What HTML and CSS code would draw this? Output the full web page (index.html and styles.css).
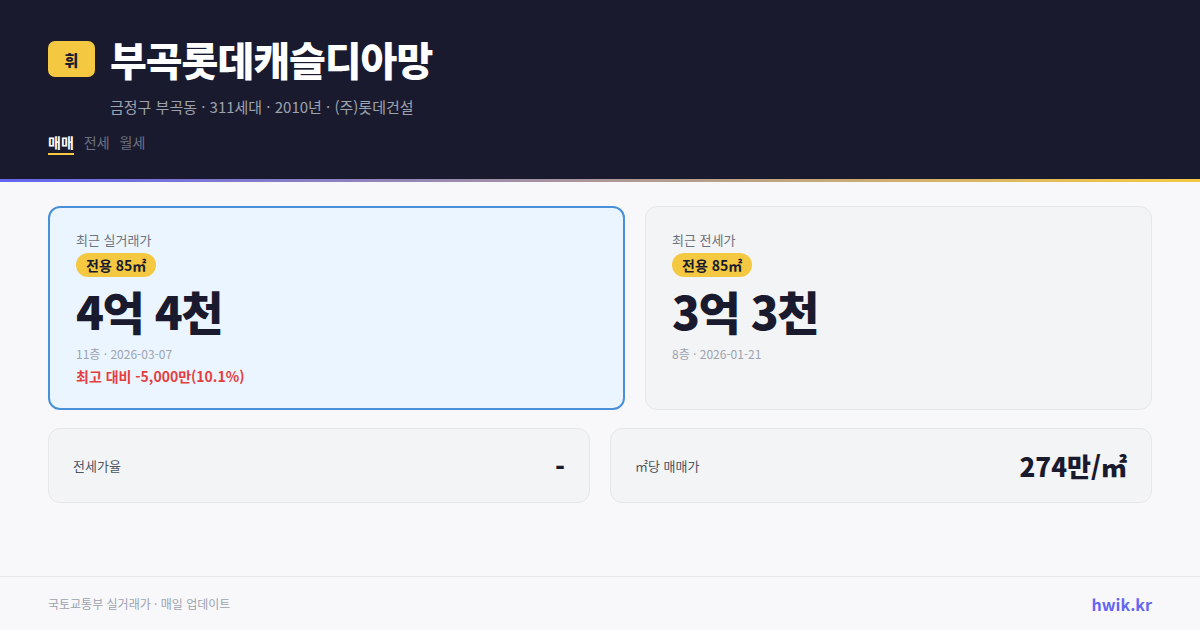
FILE: index.html
```html
<!DOCTYPE html>
<html lang="ko">
<head>
<meta charset="utf-8">
<link rel="stylesheet" href="styles.css">
</head>
<body>
<header class="hero">
  <div class="title-row">
    <div class="logo">휘</div>
    <h1 class="title">부곡롯데캐슬디아망</h1>
  </div>
  <p class="meta">금정구 부곡동 · 311세대 · 2010년 · (주)롯데건설</p>
  <nav class="tabs">
    <span class="tab active">매매</span>
    <span class="tab">전세</span>
    <span class="tab">월세</span>
  </nav>
</header>
<div class="accent"></div>
<main class="content">
  <section class="cards">
    <div class="card primary">
      <div class="label">최근 실거래가</div>
      <span class="badge">전용 85㎡</span>
      <div class="price">4억 4천</div>
      <div class="sub">11층 · 2026-03-07</div>
      <div class="diff">최고 대비 -5,000만(10.1%)</div>
    </div>
    <div class="card">
      <div class="label">최근 전세가</div>
      <span class="badge">전용 85㎡</span>
      <div class="price">3억 3천</div>
      <div class="sub">8층 · 2026-01-21</div>
    </div>
  </section>
  <section class="stats">
    <div class="stat">
      <span class="stat-label">전세가율</span>
      <span class="stat-value">-</span>
    </div>
    <div class="stat">
      <span class="stat-label">㎡당 매매가</span>
      <span class="stat-value">274만/㎡</span>
    </div>
  </section>
</main>
<footer class="footer">
  <span class="source">국토교통부 실거래가 · 매일 업데이트</span>
  <span class="brand">hwik.kr</span>
</footer>
</body>
</html>
```

FILE: styles.css
```css
* { box-sizing: border-box; }
html, body {
  margin: 0;
  padding: 0;
}
body {
  width: 1200px;
  height: 630px;
  overflow: hidden;
  background: #f8f8fa;
  font-family: "Noto Sans CJK KR", "Noto Sans", sans-serif;
  display: flex;
  flex-direction: column;
}
.hero {
  background: #1a1a2e;
  height: 179px;
  padding: 37px 48px 0;
}
.title-row {
  display: flex;
  align-items: center;
  gap: 15px;
}
.logo {
  width: 47px;
  height: 36px;
  border-radius: 7px;
  background: #f5c842;
  color: #1a1a2e;
  font-weight: 900;
  font-size: 15px;
  display: flex;
  align-items: center;
  justify-content: center;
}
.title {
  margin: 0;
  color: #ffffff;
  font-size: 40px;
  font-weight: 900;
  letter-spacing: -1px;
  line-height: 44px;
}
.meta {
  margin: 16px 0 0 62px;
  color: #9ca3af;
  font-size: 15px;
  line-height: 20px;
}
.tabs {
  display: flex;
  gap: 10px;
  margin-top: 15px;
}
.tab {
  font-size: 14px;
  line-height: 20px;
  color: #6b7280;
  padding-bottom: 1px;
}
.tab.active {
  color: #ffffff;
  font-weight: 700;
  border-bottom: 2px solid #f5c842;
}
.accent {
  height: 3px;
  background: linear-gradient(90deg, #6366f1, #f5c842);
}
.content {
  flex: 1;
  padding: 24px 48px 0;
}
.cards {
  display: grid;
  grid-template-columns: 577fr 507fr;
  gap: 20px;
}
.card {
  height: 204px;
  border: 1px solid #e5e7eb;
  background: #f3f4f6;
  border-radius: 12px;
  padding: 24px 26px;
  display: flex;
  flex-direction: column;
  align-items: flex-start;
}
.card.primary {
  border: 2px solid #4a90d9;
  background: #ebf5ff;
  padding: 23px 26px;
}
.label {
  font-size: 13px;
  color: #6b7280;
  line-height: 18px;
}
.badge {
  margin-top: 4px;
  background: #f5c842;
  color: #1a1a2e;
  font-weight: 700;
  font-size: 14px;
  line-height: 24px;
  padding: 0 10px;
  border-radius: 12px;
}
.price {
  margin-top: 5px;
  font-size: 46px;
  font-weight: 900;
  color: #1a1a2e;
  line-height: 56px;
  letter-spacing: -1.5px;
}
.sub {
  margin-top: 7px;
  font-size: 12px;
  color: #9ca3af;
  line-height: 18px;
}
.diff {
  margin-top: 3px;
  font-size: 14px;
  font-weight: 700;
  color: #e53e3e;
  line-height: 20px;
}
.stats {
  margin-top: 18px;
  display: grid;
  grid-template-columns: 1fr 1fr;
  gap: 20px;
}
.stat {
  height: 75px;
  border: 1px solid #e5e7eb;
  background: #f3f4f6;
  border-radius: 12px;
  padding: 0 24px;
  display: flex;
  align-items: center;
  justify-content: space-between;
}
.stat-label {
  font-size: 13px;
  color: #4b5563;
}
.stat-value {
  font-size: 26px;
  font-weight: 900;
  color: #1a1a2e;
}
.footer {
  height: 54px;
  border-top: 1px solid #e5e7eb;
  padding: 0 48px;
  display: flex;
  align-items: center;
  justify-content: space-between;
}
.source {
  font-size: 12px;
  color: #9ca3af;
}
.brand {
  font-size: 16px;
  font-weight: 700;
  color: #6366f1;
}
```
